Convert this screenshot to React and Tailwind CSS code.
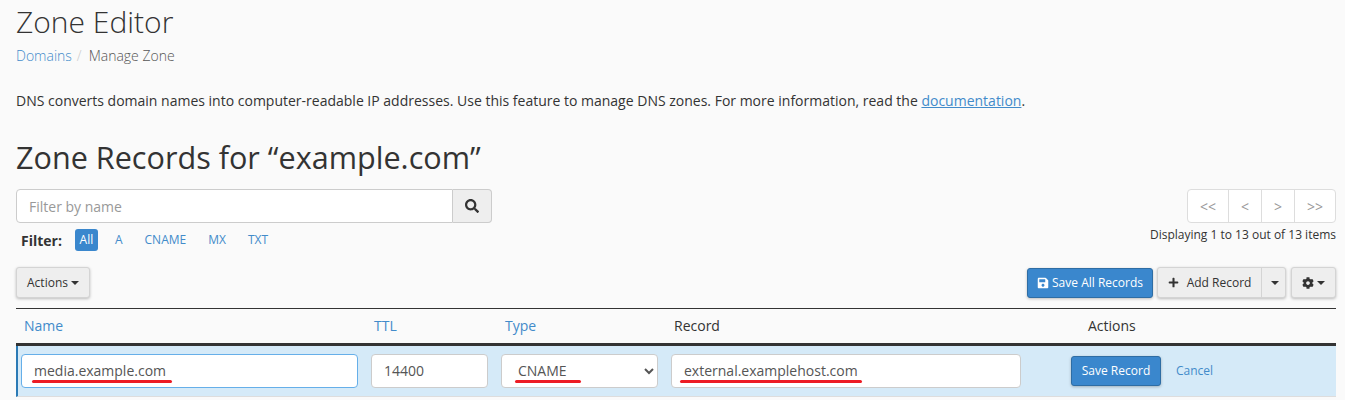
import React from 'react';
import { FaSearch, FaPlus, FaSave, FaCog } from 'react-icons/fa';

const Caret = () => (
  <span className="inline-block w-0 h-0 ml-[3px] align-middle border-x-[4px] border-x-transparent border-t-[4px] border-t-[#333]" />
);

const RedLine = ({ className }) => (
  <span className={`absolute h-[3px] rounded-full bg-[#ed1c24] ${className}`} />
);

const fieldClass = 'h-[34px] w-full rounded-[4px] border bg-white text-[14px] text-[#555] outline-none';

const raisedClass = 'h-[31px] rounded-[3px] border border-[#d4d4d4] bg-[#eeeeee] text-[12px] text-[#333] shadow-[0_1px_3px_rgba(0,0,0,0.25)]';

function App() {
  return (
    <div className="h-[400px] overflow-hidden bg-[#fafafa] pl-[16px] pr-[9px] font-['Open_Sans',sans-serif] text-[14px] text-[#333]">
      <h1 className="pt-[2px] text-[30px] font-light leading-[40px]">Zone Editor</h1>

      <div className="mt-[4px] flex h-[20px] items-center text-[14px] font-light leading-[20px]">
        <a className="text-[#428bca]">Domains</a>
        <span className="ml-[5px] mr-[7px] text-[#ccc]">/</span>
        <span className="text-[#555]">Manage Zone</span>
      </div>

      <p className="mt-[25px] text-[14px] leading-[20px]">
        DNS converts domain names into computer-readable IP addresses. Use this feature to manage DNS zones. For more information, read the{' '}
        <a className="text-[#428bca] underline">documentation</a>.
      </p>

      <h2 className="mt-[26px] text-[30.6px] font-normal leading-[40px]">Zone Records for “example.com”</h2>

      <div className="mt-[12px] flex items-start justify-between">
        <div>
          <div className="flex h-[34px] w-[476px]">
            <input
              placeholder="Filter by name"
              className="h-full flex-1 rounded-l-[4px] border border-[#ccc] bg-white pl-[12px] text-[14px] outline-none placeholder:text-[#999]"
            />
            <button className="flex h-full w-[39px] items-center justify-center rounded-r-[4px] border border-l-0 border-[#ccc] bg-[#eeeeee]">
              <FaSearch size={14} className="text-[#333]" />
            </button>
          </div>
          <div className="mt-[6px] flex h-[22px] items-center pl-[5px] text-[12px] text-[#428bca]">
            <b className="mr-[13px] text-[14px] text-[#333]">Filter:</b>
            <span className="flex h-[22px] w-[23px] items-center justify-center rounded-[3px] bg-[#3a87cd] text-white">All</span>
            <span className="ml-[17px]">A</span>
            <span className="ml-[22px]">CNAME</span>
            <span className="ml-[22px]">MX</span>
            <span className="ml-[22px]">TXT</span>
          </div>
        </div>
        <div className="flex flex-col items-end">
          <div className="flex h-[34px] w-[149px] rounded-[4px] border border-[#ddd] bg-white text-[14px] text-[#999]">
            <span className="flex w-[41px] items-center justify-center border-r border-[#ddd]">&lt;&lt;</span>
            <span className="flex w-[33px] items-center justify-center border-r border-[#ddd]">&lt;</span>
            <span className="flex w-[33px] items-center justify-center border-r border-[#ddd]">&gt;</span>
            <span className="flex flex-1 items-center justify-center">&gt;&gt;</span>
          </div>
          <div className="mt-[3px] text-[12px] leading-[18px]">Displaying 1 to 13 out of 13 items</div>
        </div>
      </div>

      <div className="mt-[16px] flex items-center justify-between">
        <button className={`${raisedClass} w-[74px]`}>
          Actions<Caret />
        </button>
        <div className="flex items-center">
          <button className="flex h-[30px] w-[126px] items-center justify-center rounded-[3px] border border-[#2e6da4] bg-[#3a87cd] text-[12px] text-white shadow-[0_1px_3px_rgba(0,0,0,0.25)]">
            <FaSave size={12} className="mr-[3px]" />
            Save All Records
          </button>
          <div className={`${raisedClass} ml-[4px] flex h-[30px] w-[129px] items-center`}>
            <span className="flex h-full w-[104px] items-center justify-center border-r border-[#d4d4d4]">
              <FaPlus size={11} className="mr-[8px]" />
              Add Record
            </span>
            <span className="flex flex-1 items-center justify-center">
              <Caret />
            </span>
          </div>
          <button className={`${raisedClass} ml-[5px] flex h-[30px] w-[45px] items-center justify-center`}>
            <FaCog size={12} />
            <Caret />
          </button>
        </div>
      </div>

      <div className="mt-[10px] border-t border-[#333]">
        <div className="flex h-[37px] items-center border-b-[3px] border-[#333] text-[14px] leading-[20px]">
          <a className="ml-[8px] w-[350px] text-[#428bca]">Name</a>
          <a className="w-[131px] text-[#428bca]">TTL</a>
          <a className="w-[169px] text-[#428bca]">Type</a>
          <span className="w-[414px]">Record</span>
          <span>Actions</span>
        </div>
        <div className="flex h-[51px] items-center gap-[13px] border-b border-l-2 border-b-[#ddd] border-l-[#2b7ab5] bg-[#d5eaf8] pl-[3px] pb-px">
          <div className="relative w-[337px]">
            <input readOnly value="media.example.com" className={`${fieldClass} border-[#66afe9] pl-[12px]`} />
            <RedLine className="left-[11px] top-[26px] w-[140px]" />
          </div>
          <div className="w-[117px]">
            <input readOnly value="14400" className={`${fieldClass} border-[#ccc] pl-[12px]`} />
          </div>
          <div className="relative w-[157px]">
            <select className={`${fieldClass} border-[#ccc] pl-[12px]`} defaultValue="CNAME">
              <option>CNAME</option>
            </select>
            <RedLine className="left-[14px] top-[26px] w-[66px]" />
          </div>
          <div className="relative w-[350px]">
            <input readOnly value="external.examplehost.com" className={`${fieldClass} border-[#ccc] pl-[12px]`} />
            <RedLine className="left-[9px] top-[26px] w-[182px]" />
          </div>
          <button className="ml-[37px] h-[30px] w-[90px] rounded-[3px] border border-[#2e6da4] bg-[#3a87cd] text-[12px] text-white shadow-[0_1px_3px_rgba(0,0,0,0.25)]">
            Save Record
          </button>
          <a className="ml-[2px] text-[12px] text-[#428bca]">Cancel</a>
        </div>
      </div>
    </div>
  );
}

export default App;
